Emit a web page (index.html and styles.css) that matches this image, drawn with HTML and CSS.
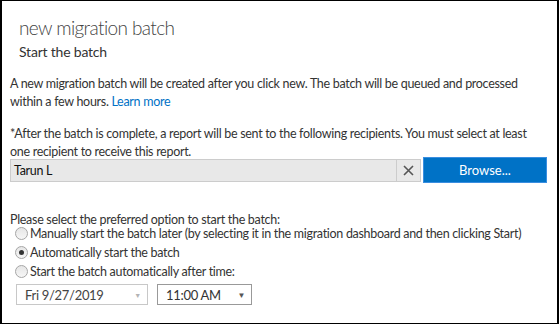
FILE: index.html
```html
<!DOCTYPE html>
<html lang="en">
<head>
    <meta charset="UTF-8">
    <title>new migration batch</title>
    <link rel="stylesheet" href="styles.css">
</head>
<body>
    <div class="dialog">
        <div class="header">
            <h1>new migration batch</h1>
            <h2>Start the batch</h2>
        </div>

        <p class="info">A new migration batch will be created after you click new. The batch will be queued and processed within a few hours. <a href="#">Learn more</a></p>

        <p class="info">*After the batch is complete, a report will be sent to the following recipients. You must select at least one recipient to receive this report.</p>

        <div class="recipients">
            <div class="picker">
                <span class="picker-text">Tarun L</span>
                <span class="picker-clear">
                    <svg width="11" height="11" viewBox="0 0 11 11"><path d="M1 1 L10 10 M10 1 L1 10" stroke="#555" stroke-width="1.6"/></svg>
                </span>
            </div>
            <button class="browse">Browse...</button>
        </div>

        <div class="options">
            <div class="options-title">Please select the preferred option to start the batch:</div>
            <label class="radio"><span class="dot"></span>Manually start the batch later (by selecting it in the migration dashboard and then clicking Start)</label>
            <label class="radio checked"><span class="dot"></span>Automatically start the batch</label>
            <label class="radio"><span class="dot"></span>Start the batch automatically after time:</label>
            <div class="when">
                <div class="select date">
                    <span>Fri 9/27/2019</span>
                    <span class="arrow">&#9660;</span>
                </div>
                <div class="select time">
                    <span>11:00 AM</span>
                    <span class="arrow">&#9660;</span>
                </div>
            </div>
        </div>
    </div>
</body>
</html>
```

FILE: styles.css
```css
body {
    margin: 0;
    font-family: 'Lato', 'Open Sans', sans-serif;
    font-size: 12.5px;
    letter-spacing: -0.3px;
    color: #333333;
    background-color: #ffffff;
}
.dialog {
    width: 555px;
    height: 322px;
    border: 1px solid #000000;
    border-left-width: 2px;
    border-right-width: 2px;
    box-sizing: content-box;
    overflow: hidden;
}
.header {
    padding: 14px 0 0 17px;
}
h1 {
    margin: 0;
    font-size: 19px;
    font-weight: 300;
    letter-spacing: -0.6px;
    color: #444444;
    line-height: 26px;
}
h2 {
    margin: 2px 0 0 0;
    font-size: 14px;
    font-weight: 400;
    letter-spacing: -0.2px;
    color: #333333;
    line-height: 18px;
}
.info {
    margin: 14px 0 0 8px;
    line-height: 18px;
    padding-right: 20px;
}
.info + .info {
    margin-top: 14px;
}
a {
    color: #0072c6;
    text-decoration: none;
}
.recipients {
    display: flex;
    align-items: center;
    margin: -4px 0 0 8px;
}
.picker {
    display: flex;
    width: 411px;
    height: 23px;
    box-sizing: border-box;
    border: 1px solid #cccccc;
    background-color: #e8e8e8;
}
.picker-text {
    flex: 1;
    padding-left: 3px;
    line-height: 21px;
    color: #111111;
}
.picker-clear {
    width: 23px;
    border-left: 1px solid #cccccc;
    display: flex;
    align-items: center;
    justify-content: center;
}
.browse {
    margin-left: 2px;
    width: 124px;
    height: 26px;
    background-color: #0072c6;
    border: 1px solid #3a8ee0;
    color: #ffffff;
    font-family: inherit;
    font-size: 13px;
    letter-spacing: 0;
}
.options {
    margin: 30px 0 0 8px;
}
.options-title {
    line-height: 14px;
    margin-bottom: -3px;
}
.radio {
    display: flex;
    align-items: center;
    height: 19px;
    margin-left: 5px;
    white-space: nowrap;
    color: #333333;
}
.dot {
    flex-shrink: 0;
    width: 11px;
    height: 11px;
    border-radius: 50%;
    border: 1px solid #a6a6a6;
    background: linear-gradient(#e6e6e6, #f6f6f6);
    margin-right: 2px;
    display: flex;
    align-items: center;
    justify-content: center;
}
.checked .dot::after {
    content: "";
    width: 5px;
    height: 5px;
    border-radius: 50%;
    background-color: #333333;
}
.when {
    display: flex;
    gap: 9px;
    margin: 3px 0 0 6px;
}
.select {
    display: flex;
    align-items: center;
    justify-content: space-between;
    height: 21px;
    box-sizing: border-box;
    padding: 0 6px 0 8px;
    border: 1px solid #c8c8c8;
    font-size: 13px;
    color: #444444;
}
.date {
    width: 132px;
}
.time {
    width: 95px;
    border-color: #999999;
    color: #333333;
}
.arrow {
    font-size: 7px;
    color: #b4b4b4;
}
.time .arrow {
    color: #555555;
    font-size: 8px;
}
```
